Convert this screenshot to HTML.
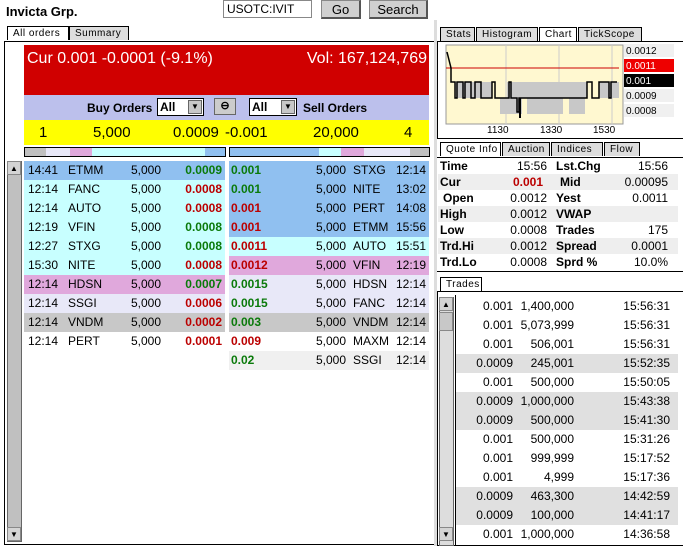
<!DOCTYPE html>
<html><head><style>
*{box-sizing:border-box;margin:0;padding:0}
body{width:683px;height:546px;background:#fff;font-family:"Liberation Sans",sans-serif;font-size:12px;position:relative;overflow:hidden}
.a{position:absolute}
.tab{position:absolute;height:14px;font-size:10px;line-height:13px;border:1px solid #000;border-bottom:none;background:#ddd;padding-left:5px;letter-spacing:.5px}
.tab.on{background:#fff}
.btn{position:absolute;background:#d0d0d0;border:1px solid #888;border-right:2px solid #555;border-bottom:2px solid #555;text-align:center;font-size:13px;line-height:17px}
.row{position:absolute;height:19px;line-height:19px;font-size:12px}
.row span{position:absolute}
.g{color:#0a7a0a;font-weight:bold}.r{color:#b00;font-weight:bold}
.sb{position:absolute;background:#c0c0c0;border:1px solid #666}
.arr{position:absolute;width:14px;height:14px;background:#d4d4d4;border:1px solid #888;font-size:8px;text-align:center;line-height:13px}
.q{position:absolute;height:16px;line-height:16px;font-size:12px;width:240px;left:438px}
.q span,.q b{position:absolute;display:block}
.q .v{left:40px;width:69px;text-align:right}
.t{position:absolute;left:456px;width:222px;height:19px;line-height:19px;font-size:12px}
.t span{position:absolute;text-align:right}
</style></head><body>
<div class="a" style="left:6px;top:4px;font-weight:bold;font-size:13px">Invicta Grp.</div>
<div class="a" style="left:223px;top:0;width:89px;height:18px;border:1px solid #888;background:#fff;font-size:12px;line-height:16px;padding-left:3px">USOTC:IVIT</div>
<div class="btn" style="left:321px;top:0;width:40px;height:19px">Go</div>
<div class="btn" style="left:369px;top:0;width:59px;height:19px">Search</div>

<div class="tab on" style="left:7px;top:26px;width:62px">All orders</div>
<div class="tab" style="left:69px;top:26px;width:60px">Summary</div>
<div class="a" style="left:4px;top:41px;width:431px;height:504px;border:1px solid #000;background:#fff"></div>
<div class="a" style="left:24px;top:45px;width:405px;height:50px;background:#d00000;color:#fff;font-size:16px">
<span class="a" style="left:3px;top:5px">Cur 0.001 -0.0001 (-9.1%)</span>
<span class="a" style="right:2px;top:5px">Vol: 167,124,769</span></div>
<div class="a" style="left:24px;top:95px;width:405px;height:25px;background:#bcc0ec;font-weight:bold;font-size:12px">
<span class="a" style="left:63px;top:6px">Buy Orders</span>
<span class="a" style="left:133px;top:3px;width:47px;height:18px;background:#fff;border:1px solid #000;padding-left:2px;line-height:16px">All<span class="a" style="right:1px;top:1px;width:14px;height:14px;background:#c8c8c8;border:1px solid #666;font-size:8px;text-align:center;line-height:12px">▼</span></span>
<span class="a" style="left:190px;top:3px;width:22px;height:17px;background:#ccc;border:1px solid #666;font-size:11px;text-align:center;line-height:15px">⊖</span>
<span class="a" style="left:225px;top:3px;width:48px;height:18px;background:#fff;border:1px solid #000;padding-left:2px;line-height:16px">All<span class="a" style="right:1px;top:1px;width:14px;height:14px;background:#c8c8c8;border:1px solid #666;font-size:8px;text-align:center;line-height:12px">▼</span></span>
<span class="a" style="left:279px;top:6px">Sell Orders</span></div>
<div class="a" style="left:24px;top:120px;width:405px;height:25px;background:#ffff00;font-size:15px;line-height:25px">
<span class="a" style="left:15px">1</span><span class="a" style="left:69px">5,000</span><span class="a" style="left:149px">0.0009</span><span class="a" style="left:201px">-0.001</span><span class="a" style="left:289px">20,000</span><span class="a" style="left:380px">4</span></div>
<div class="a" style="left:24px;top:147px;width:202px;height:10px;border:1px solid #000;background:linear-gradient(90deg,#c0c0c0 0 21px,#e8e8f8 21px 45px,#e0a8dc 45px 67px,#c8ffff 67px 180px,#90c0f0 180px)"></div>
<div class="a" style="left:229px;top:147px;width:201px;height:10px;border:1px solid #000;background:linear-gradient(90deg,#90c0f0 0 89px,#c8ffff 89px 111px,#e0a8dc 111px 134px,#e8e8f8 134px 180px,#c0c0c0 180px)"></div>

<div class="sb" style="left:7px;top:161px;width:15px;height:381px"></div>
<div class="arr" style="left:7px;top:161px">▲</div>
<div class="arr" style="left:7px;top:527px">▼</div>

<div id="L"></div>
<script>
var L=[["14:41","ETMM","0.0009","g","#90c0f0"],["12:14","FANC","0.0008","r","#c8ffff"],["12:14","AUTO","0.0008","r","#c8ffff"],["12:19","VFIN","0.0008","g","#c8ffff"],["12:27","STXG","0.0008","g","#c8ffff"],["15:30","NITE","0.0008","r","#c8ffff"],["12:14","HDSN","0.0007","g","#e0a8dc"],["12:14","SSGI","0.0006","r","#e8e8f8"],["12:14","VNDM","0.0002","r","#c8c8c8"],["12:14","PERT","0.0001","r","#fff"]];
var R=[["0.001","g","STXG","12:14","#90c0f0"],["0.001","g","NITE","13:02","#90c0f0"],["0.001","r","PERT","14:08","#90c0f0"],["0.001","r","ETMM","15:56","#90c0f0"],["0.0011","r","AUTO","15:51","#c8ffff"],["0.0012","r","VFIN","12:19","#e0a8dc"],["0.0015","g","HDSN","12:14","#e8e8f8"],["0.0015","g","FANC","12:14","#e8e8f8"],["0.003","g","VNDM","12:14","#c8c8c8"],["0.009","r","MAXM","12:14","#fff"],["0.02","g","SSGI","12:14","#f0f0f0"]];
var h="";
L.forEach(function(d,i){h+='<div class="row" style="left:24px;top:'+(161+i*19)+'px;width:201px;background:'+d[4]+'"><span style="left:4px">'+d[0]+'</span><span style="left:44px">'+d[1]+'</span><span style="left:107px">5,000</span><span class="'+d[3]+'" style="right:3px">'+d[2]+'</span></div>'});
R.forEach(function(d,i){h+='<div class="row" style="left:229px;top:'+(161+i*19)+'px;width:200px;background:'+d[4]+'"><span class="'+d[1]+'" style="left:2px">'+d[0]+'</span><span style="left:87px">5,000</span><span style="left:124px">'+d[2]+'</span><span style="right:3px">'+d[3]+'</span></div>'});
document.getElementById("L").innerHTML=h;
</script>

<div class="a" style="left:434px;top:20px;width:3px;height:526px;background:#ddd"></div>
<div class="tab" style="left:440px;top:27px;width:35px">Stats</div>
<div class="tab" style="left:476px;top:27px;width:62px">Histogram</div>
<div class="tab on" style="left:539px;top:27px;width:38px">Chart</div>
<div class="tab" style="left:578px;top:27px;width:64px">TickScope</div>
<div class="a" style="left:437px;top:41px;width:246px;height:98px;border:1px solid #000;border-right:none;background:#fff"></div>
<svg class="a" style="left:437px;top:42px" width="246" height="96">
<rect x="9" y="3" width="177" height="79" fill="#fff8d0" stroke="#999"/>
<line x1="69" y1="3" x2="69" y2="82" stroke="#ccc"/><line x1="122" y1="3" x2="122" y2="82" stroke="#ccc"/><line x1="175" y1="3" x2="175" y2="82" stroke="#ccc"/>
<path d="M12 40H18V56H55V40H70V56H150V40H162V56H182V40H12Z" fill="#c8c8c8"/>
<path d="M63 56H85V72H63ZM90 56H126V72H90ZM132 56H148V72H132Z" fill="#c8c8c8"/>
<line x1="9" y1="26" x2="182" y2="26" stroke="#c00"/>
<path d="M10 10L14 26V40H18V56H20V40H26V56H28V40H34V56H38V40H44V56H55V40H58V56H72V40H74V56H80V70H82V56H150V40H155V56H162V40H172V56H174V40H180" fill="none" stroke="#000" stroke-width="1.5"/>
<line x1="83" y1="56" x2="83" y2="76" stroke="#000" stroke-width="2"/>
<rect x="187" y="2" width="50" height="13" fill="#f0f0f0"/><text x="189" y="12" font-size="10" font-family="Liberation Sans">0.0012</text>
<rect x="187" y="17" width="50" height="13" fill="#e00"/><text x="189" y="27" font-size="10" fill="#fff" font-family="Liberation Sans">0.0011</text>
<rect x="187" y="32" width="50" height="13" fill="#000"/><text x="189" y="42" font-size="10" fill="#fff" font-family="Liberation Sans">0.001</text>
<rect x="187" y="47" width="50" height="13" fill="#f0f0f0"/><text x="189" y="57" font-size="10" font-family="Liberation Sans">0.0009</text>
<rect x="187" y="62" width="50" height="13" fill="#f0f0f0"/><text x="189" y="72" font-size="10" font-family="Liberation Sans">0.0008</text>
<text x="50" y="91" font-size="10" font-family="Liberation Sans">1130</text>
<text x="103" y="91" font-size="10" font-family="Liberation Sans">1330</text>
<text x="156" y="91" font-size="10" font-family="Liberation Sans">1530</text>
</svg>
<div class="tab on" style="left:440px;top:142px;width:61px">Quote Info</div>
<div class="tab" style="left:502px;top:142px;width:48px">Auction</div>
<div class="tab" style="left:551px;top:142px;width:52px">Indices</div>
<div class="tab" style="left:604px;top:142px;width:36px">Flow</div>
<div class="a" style="left:437px;top:157px;width:246px;height:115px;border-top:1px solid #000;border-bottom:1px solid #000"></div>
<div class="q" style="top:158px"><b style="left:2px">Time</b><span class="v">15:56</span><b style="left:118px">Lst.Chg</b><span style="right:10px">15:56</span></div>
<div class="q" style="top:174px;background:#eee"><b style="left:2px">Cur</b><b class="v" style="color:#b00;width:65px">0.001</b><b style="left:122px">Mid</b><span style="right:10px">0.00095</span></div>
<div class="q" style="top:190px"><b style="left:5px">Open</b><span class="v">0.0012</span><b style="left:118px">Yest</b><span style="right:10px">0.0011</span></div>
<div class="q" style="top:206px;background:#eee"><b style="left:2px">High</b><span class="v">0.0012</span><b style="left:118px">VWAP</b></div>
<div class="q" style="top:222px"><b style="left:2px">Low</b><span class="v">0.0008</span><b style="left:118px">Trades</b><span style="right:10px">175</span></div>
<div class="q" style="top:238px;background:#eee"><b style="left:2px">Trd.Hi</b><span class="v">0.0012</span><b style="left:118px">Spread</b><span style="right:10px">0.0001</span></div>
<div class="q" style="top:254px"><b style="left:2px">Trd.Lo</b><span class="v">0.0008</span><b style="left:118px">Sprd %</b><span style="right:10px">10.0%</span></div>
<div class="tab on" style="left:440px;top:277px;width:42px">Trades</div>
<div class="a" style="left:437px;top:291px;width:246px;height:255px;border:1px solid #000;border-right:none"></div>
<div class="sb" style="left:439px;top:297px;width:15px;height:249px;background:#ddd"></div>
<div class="arr" style="left:439px;top:297px">▲</div>
<div class="arr" style="left:439px;top:312px;height:19px;background:#c8c8c8"></div>
<div class="arr" style="left:439px;top:527px">▼</div>
<div class="a" style="left:455px;top:295px;width:1px;height:251px;background:#000"></div>
<div id="T"></div>
<script>
var T=[["0.001","1,400,000","15:56:31",0],["0.001","5,073,999","15:56:31",0],["0.001","506,001","15:56:31",0],["0.0009","245,001","15:52:35",1],["0.001","500,000","15:50:05",0],["0.0009","1,000,000","15:43:38",1],["0.0009","500,000","15:41:30",1],["0.001","500,000","15:31:26",0],["0.001","999,999","15:17:52",0],["0.001","4,999","15:17:36",0],["0.0009","463,300","14:42:59",1],["0.0009","100,000","14:41:17",1],["0.001","1,000,000","14:36:58",0]];
var s="";T.forEach(function(d,i){s+='<div class="t" style="top:'+(297+i*19)+'px;background:'+(d[3]?'#e0e0e0':'#fff')+'"><span style="right:165px">'+d[0]+'</span><span style="right:104px">'+d[1]+'</span><span style="right:8px">'+d[2]+'</span></div>'});
document.getElementById("T").innerHTML=s;
</script>
</body></html>
